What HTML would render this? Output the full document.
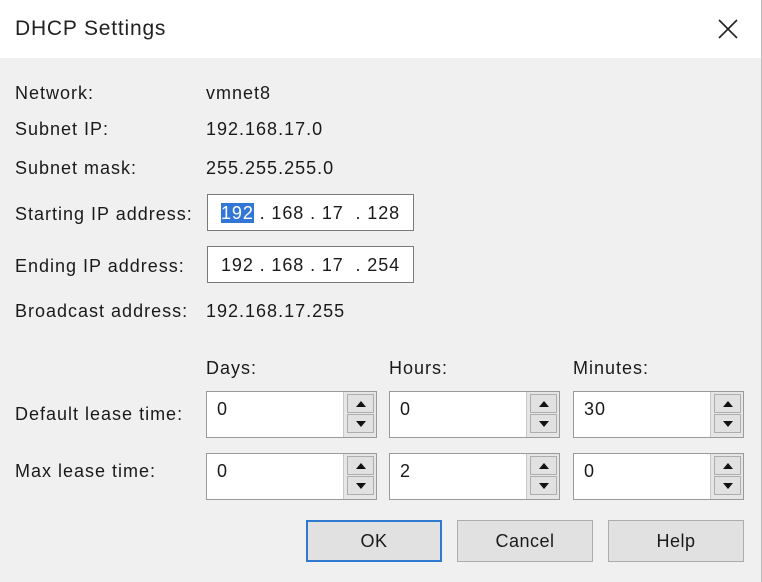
<!DOCTYPE html>
<html><head><meta charset="utf-8"><style>
*{margin:0;padding:0;box-sizing:border-box}
body{width:762px;height:582px;background:#f0f0f0;font-family:"Liberation Sans",sans-serif;font-size:18px;letter-spacing:1px;color:#1a1a1a;position:relative;overflow:hidden}
.title{position:absolute;left:0;top:0;width:762px;height:58px;background:#fff}
.title span{position:absolute;left:15px;top:17px;font-size:21px;letter-spacing:0.8px;color:#222}
.t{position:absolute;white-space:nowrap}
.box{position:absolute;background:#fff;border:1px solid #7a7a7a}
.ip{font-size:18px;letter-spacing:0.9px}
.spin{position:absolute;background:#fff;border:1px solid #9a9a9a;width:171px;height:47px}
.spin .v{position:absolute;left:10px;top:7px}
.sb{position:absolute;right:0;top:0;width:33px;height:45px;background:#e6e6e6;border-left:1px solid #c8c8c8}
.sb div{position:absolute;left:3px;width:27px;height:19px;border:1px solid #adadad;background:#e1e1e1}
.up{top:2px}.dn{top:22px}
.up:after,.dn:after{content:"";position:absolute;left:8px;border-left:5px solid transparent;border-right:5px solid transparent}
.up:after{top:6px;border-bottom:6px solid #111}
.dn:after{top:6px;border-top:6px solid #111}
.btn{position:absolute;top:520px;height:42px;width:136px;background:#e1e1e1;border:1px solid #adadad;text-align:center;line-height:40px;font-size:18px;letter-spacing:0.5px}
</style></head><body>
<div class="title"><span>DHCP Settings</span>
<svg style="position:absolute;left:718px;top:19px" width="20" height="20"><path d="M1 1L19 19M19 1L1 19" stroke="#222" stroke-width="1.6"/></svg></div>
<div style="position:absolute;right:0;top:0;width:1px;height:582px;background:#bbb"></div>
<div class="t" style="left:15px;top:83px">Network:</div><div class="t" style="left:206px;top:83px">vmnet8</div>
<div class="t" style="left:15px;top:119px">Subnet IP:</div><div class="t" style="left:206px;top:119px">192.168.17.0</div>
<div class="t" style="left:15px;top:158px">Subnet mask:</div><div class="t" style="left:206px;top:158px">255.255.255.0</div>
<div class="t" style="left:15px;top:204px">Starting IP address:</div>
<div class="box" style="left:207px;top:194px;width:207px;height:37px"><span class="t ip" style="left:13px;top:8px"><span style="background:#3377d6;color:#fff">192</span> . 168 . 17 &nbsp;. 128</span></div>
<div class="t" style="left:15px;top:256px">Ending IP address:</div>
<div class="box" style="left:207px;top:246px;width:207px;height:37px"><span class="t ip" style="left:13px;top:8px">192 . 168 . 17 &nbsp;. 254</span></div>
<div class="t" style="left:15px;top:301px">Broadcast address:</div><div class="t" style="left:206px;top:301px">192.168.17.255</div>
<div class="t" style="left:206px;top:358px">Days:</div><div class="t" style="left:389px;top:358px">Hours:</div><div class="t" style="left:573px;top:358px">Minutes:</div>
<div class="t" style="left:15px;top:404px">Default lease time:</div>
<div class="t" style="left:15px;top:461px">Max lease time:</div>
<div class="spin" style="left:206px;top:391px"><span class="v">0</span><div class="sb"><div class="up"></div><div class="dn"></div></div></div>
<div class="spin" style="left:389px;top:391px"><span class="v">0</span><div class="sb"><div class="up"></div><div class="dn"></div></div></div>
<div class="spin" style="left:573px;top:391px"><span class="v">30</span><div class="sb"><div class="up"></div><div class="dn"></div></div></div>
<div class="spin" style="left:206px;top:453px"><span class="v">0</span><div class="sb"><div class="up"></div><div class="dn"></div></div></div>
<div class="spin" style="left:389px;top:453px"><span class="v">2</span><div class="sb"><div class="up"></div><div class="dn"></div></div></div>
<div class="spin" style="left:573px;top:453px"><span class="v">0</span><div class="sb"><div class="up"></div><div class="dn"></div></div></div>
<div class="btn" style="left:306px;border:2px solid #2f79d0;line-height:38px">OK</div>
<div class="btn" style="left:457px">Cancel</div>
<div class="btn" style="left:608px">Help</div>
</body></html>
